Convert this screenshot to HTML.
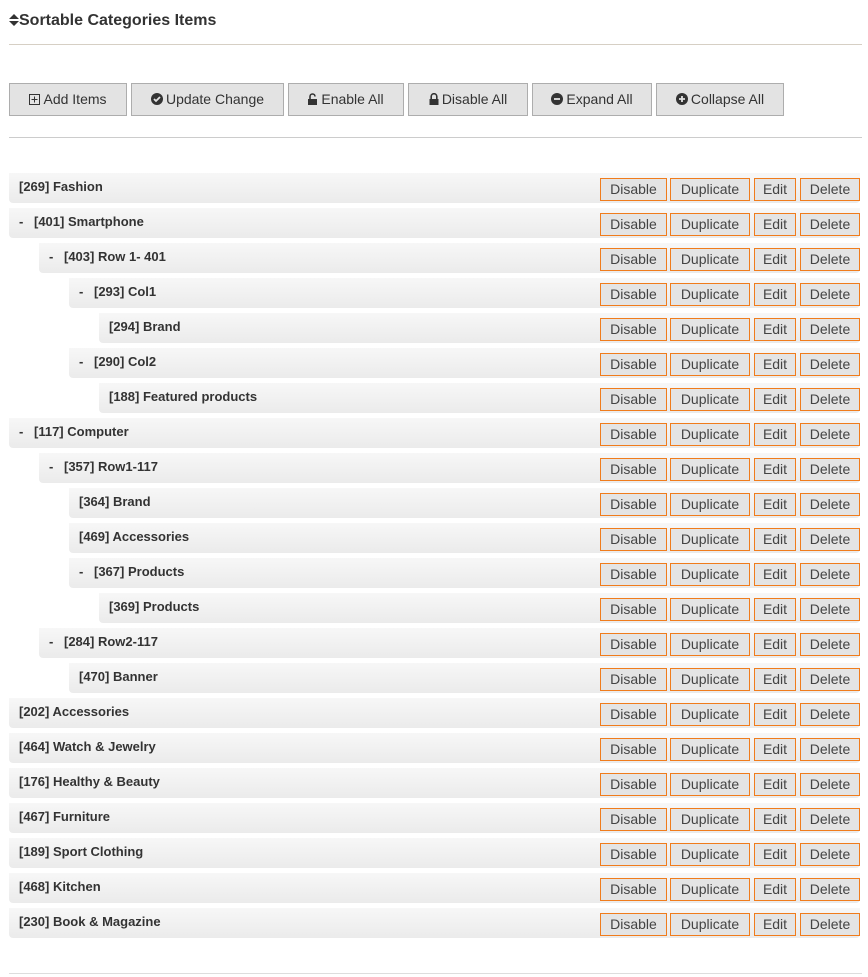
<!DOCTYPE html>
<html><head><style>
body{margin:0;width:868px;height:977px;background:#fff;font-family:"Liberation Sans",sans-serif;color:#333;position:relative;overflow:hidden}
.t{position:absolute;left:9px;top:12px;font-size:16px;font-weight:bold;color:#333}
.hr{position:absolute;left:9px;right:6px;height:1px}
.tb{position:absolute;top:83px;border:1px solid #adadad;background:#e3e3e3;font-size:14px;color:#333;box-sizing:border-box;height:33px;line-height:31px;text-align:center}
.tb svg{vertical-align:-1px;margin-right:3px}
.r{position:absolute;height:30px;border-radius:0 0 4px 4px;background:linear-gradient(#f7f7f7,#ebebeb);font-weight:bold;font-size:13px;line-height:28px;color:#333;right:8px}
.b{position:absolute;top:5px;height:23px;box-sizing:border-box;border:1px solid #f07c1c;background:#e4e4e4;font-weight:normal;font-size:14px;line-height:20px;text-align:center;color:#444}
.pre{display:inline-block;width:15px}
</style></head><body>
<div class="t"><svg width="10" height="12" viewBox="0 0 10 12" style="vertical-align:-1px"><path d="M5 0L10 5H0Z M5 12L10 7H0Z" fill="#333"/></svg>Sortable Categories Items</div>
<div class="hr" style="top:44px;background:#d6cfc4"></div>
<div class="tb" style="left:9px;width:118px"><svg width="11" height="11" viewBox="0 0 11 11"><rect x=".5" y=".5" width="10" height="10" fill="none" stroke="#333"/><path d="M5.5 2.5v6M2.5 5.5h6" stroke="#333"/></svg>Add Items</div>
<div class="tb" style="left:131px;width:153px"><svg width="12" height="12" viewBox="0 0 12 12"><circle cx="6" cy="6" r="6" fill="#333"/><path d="M3 6l2 2 4-4" stroke="#e3e3e3" stroke-width="1.8" fill="none"/></svg>Update Change</div>
<div class="tb" style="left:288px;width:116px"><svg width="10" height="12" viewBox="0 0 10 12"><path d="M2 6V3.5a2.5 2.5 0 0 1 5 0" stroke="#333" stroke-width="1.6" fill="none"/><rect x="0" y="6" width="9" height="6" fill="#333"/></svg>Enable All</div>
<div class="tb" style="left:408px;width:120px"><svg width="10" height="12" viewBox="0 0 10 12"><path d="M2.2 6V3.5a2.8 2.8 0 0 1 5.6 0V6" stroke="#333" stroke-width="1.6" fill="none"/><rect x="0.5" y="6" width="9" height="6" fill="#333"/></svg>Disable All</div>
<div class="tb" style="left:532px;width:120px"><svg width="12" height="12" viewBox="0 0 12 12"><circle cx="6" cy="6" r="6" fill="#333"/><path d="M3 6h6" stroke="#e3e3e3" stroke-width="1.8"/></svg>Expand All</div>
<div class="tb" style="left:656px;width:128px"><svg width="12" height="12" viewBox="0 0 12 12"><circle cx="6" cy="6" r="6" fill="#333"/><path d="M3 6h6M6 3v6" stroke="#e3e3e3" stroke-width="1.8"/></svg>Collapse All</div>
<div class="hr" style="top:137px;background:#ccc"></div>
<div class="hr" style="top:973px;background:#ddd"></div>
<div id="rows"></div>
<script>
var d=[[0,0,"[269] Fashion"],[0,1,"[401] Smartphone"],[1,1,"[403] Row 1- 401"],[2,1,"[293] Col1"],[3,0,"[294] Brand"],[2,1,"[290] Col2"],[3,0,"[188] Featured products"],[0,1,"[117] Computer"],[1,1,"[357] Row1-117"],[2,0,"[364] Brand"],[2,0,"[469] Accessories"],[2,1,"[367] Products"],[3,0,"[369] Products"],[1,1,"[284] Row2-117"],[2,0,"[470] Banner"],[0,0,"[202] Accessories"],[0,0,"[464] Watch &amp; Jewelry"],[0,0,"[176] Healthy &amp; Beauty"],[0,0,"[467] Furniture"],[0,0,"[189] Sport Clothing"],[0,0,"[468] Kitchen"],[0,0,"[230] Book &amp; Magazine"]];
var h="";
d.forEach(function(r,i){var L=9+30*r[0];var top=173+35*i;
h+='<div class="r" style="left:'+L+'px;top:'+top+'px"><span style="position:absolute;left:10px">'+(r[1]?'<span class="pre">-</span>':'')+r[2]+'</span>';
var bl=[[600,67,"Disable"],[670,80,"Duplicate"],[754,42,"Edit"],[800,60,"Delete"]];
bl.forEach(function(b){h+='<div class="b" style="left:'+(b[0]-L)+'px;width:'+b[1]+'px">'+b[2]+'</div>'});
h+='</div>';});
document.getElementById("rows").innerHTML=h;
</script>
</body></html>
